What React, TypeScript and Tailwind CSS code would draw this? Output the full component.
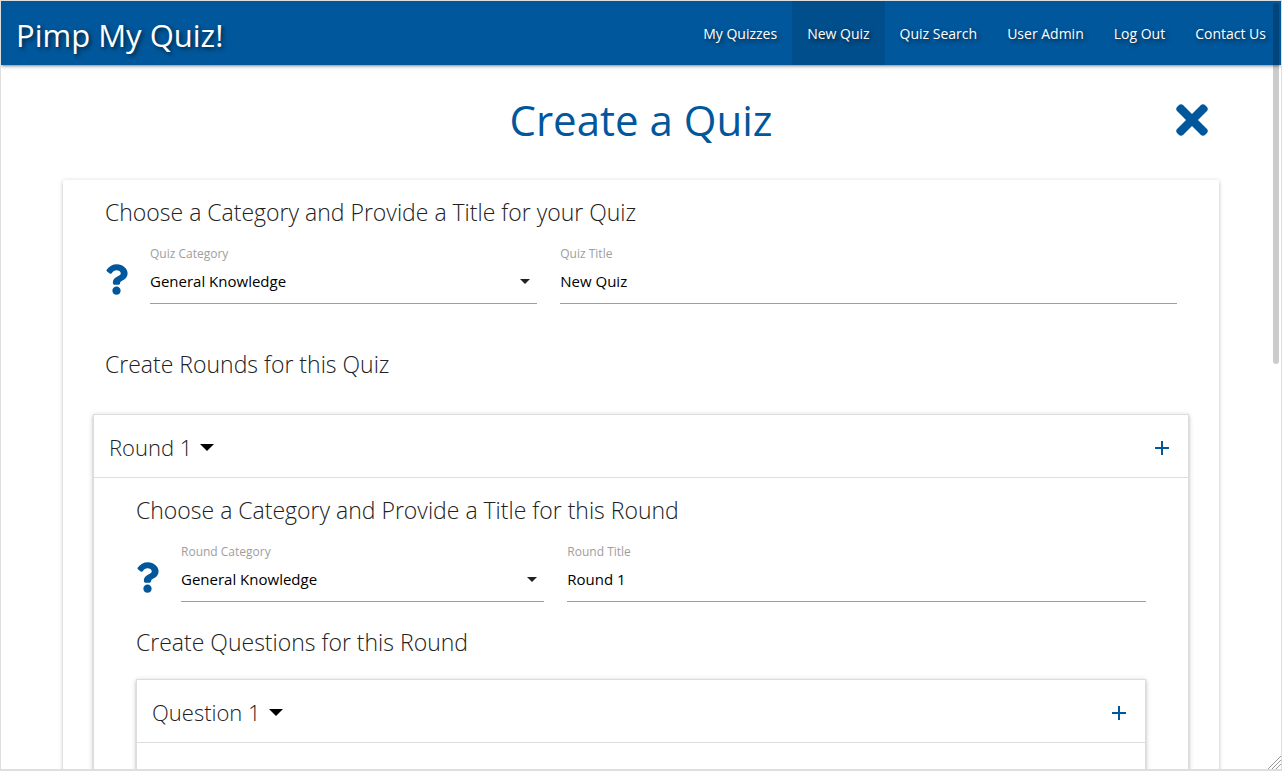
import { useState, type ReactNode } from "react";
import { FaQuestion, FaTimes } from "react-icons/fa";

const navItems = ["My Quizzes", "New Quiz", "Quiz Search", "User Admin", "Log Out", "Contact Us"];
const categories = ["General Knowledge", "Geography", "History", "Music", "Science", "Sport"];

function Caret({ className }: { className: string }) {
  return (
    <svg viewBox="0 0 14 7" className={className} fill="currentColor" aria-hidden="true">
      <path d="M0 0h14L7 7z" />
    </svg>
  );
}

function SectionTitle({ children }: { children: ReactNode }) {
  return <h2 className="text-[23px] leading-10 font-light text-[#212121]">{children}</h2>;
}

type FieldsProps = { id: string; name: string; title: string };

function DetailFields({ id, name, title }: FieldsProps) {
  const [category, setCategory] = useState(categories[0]);
  const [value, setValue] = useState(title);
  return (
    <div className="flex pt-[13px]">
      <button type="button" aria-label={`Help with ${name} details`} className="mt-[18px] mr-[22px] h-8 shrink-0 text-[#01579b]">
        <FaQuestion className="h-[31px] w-[23px]" />
      </button>
      <div className="grid flex-1 grid-cols-[27fr_43fr] gap-x-[23px]">
        <div className="flex flex-col">
          <label htmlFor={`${id}-category`} className="text-xs leading-[18px] text-[#9e9e9e]">
            {name} Category
          </label>
          <div className="relative border-b border-[#9e9e9e]">
            <select
              id={`${id}-category`}
              value={category}
              onChange={(e) => setCategory(e.target.value)}
              className="block h-10 w-full appearance-none bg-transparent pb-1 text-[15px] text-black outline-none"
            >
              {categories.map((c) => (
                <option key={c}>{c}</option>
              ))}
            </select>
            <Caret className="pointer-events-none absolute top-4 right-[7px] h-[5px] w-[10px] text-[#212121]" />
          </div>
        </div>
        <div className="flex flex-col">
          <label htmlFor={`${id}-title`} className="text-xs leading-[18px] text-[#9e9e9e]">
            {name} Title
          </label>
          <input
            id={`${id}-title`}
            type="text"
            value={value}
            onChange={(e) => setValue(e.target.value)}
            className="block h-[41px] w-full border-b border-[#9e9e9e] bg-transparent pb-1 text-[15px] text-black outline-none"
          />
        </div>
      </div>
    </div>
  );
}

function Panel({ title, addLabel, children }: { title: string; addLabel: string; children?: ReactNode }) {
  return (
    <section className="border border-[#ddd] bg-white shadow-[0_2px_2px_0_rgba(0,0,0,0.14),0_3px_1px_-2px_rgba(0,0,0,0.12),0_1px_5px_0_rgba(0,0,0,0.2)]">
      <header className="flex h-[63px] items-center justify-between border-b border-[#ddd] pt-1 pr-[18px] pl-[15px]">
        <button type="button" className="flex items-center gap-2 pb-0.5 text-[22px] leading-8 font-light text-[#212121]">
          {title}
          <Caret className="h-[7px] w-[14px] text-black" />
        </button>
        <button type="button" aria-label={addLabel} className="text-[#01579b]">
          <svg viewBox="0 0 16 16" className="h-4 w-4" stroke="currentColor" strokeWidth="2" aria-hidden="true">
            <path d="M8 1v14M1 8h14" />
          </svg>
        </button>
      </header>
      {children}
    </section>
  );
}

export default function App() {
  return (
    <div className="relative flex h-screen flex-col overflow-hidden border border-b-2 border-[#dedede] bg-white font-['Open_Sans','Noto_Sans',sans-serif]">
      <nav className="z-10 flex h-16 shrink-0 items-center justify-between bg-[#01579b] text-white shadow-[0_2px_2px_0_rgba(0,0,0,0.14),0_3px_1px_-2px_rgba(0,0,0,0.12),0_1px_5px_0_rgba(0,0,0,0.2)]">
        <a href="#home" className="pt-1 pl-[15px] text-[31px] leading-10 [text-shadow:2px_2px_4px_rgba(0,0,0,0.6)]">
          Pimp My Quiz!
        </a>
        <ul className="flex">
          {navItems.map((item) => (
            <li key={item}>
              <a
                href={`#${item.toLowerCase().replace(" ", "-")}`}
                aria-current={item === "New Quiz" ? "page" : undefined}
                className="block px-[15px] pt-0.5 text-sm leading-[62px] [text-shadow:2px_2px_4px_rgba(0,0,0,0.6)] aria-[current=page]:bg-black/10"
              >
                {item}
              </a>
            </li>
          ))}
        </ul>
      </nav>

      <main className="min-h-0 flex-1 overflow-y-auto px-[62px] [scrollbar-width:none]">
        <div className="mb-[5px] grid h-[110px] grid-cols-[1fr_auto_1fr] items-center">
          <h1 className="col-start-2 text-[42px] leading-[60px] text-[#01579b]">Create a Quiz</h1>
          <button type="button" aria-label="Close" className="mr-[11px] justify-self-end text-[#01579b]">
            <FaTimes className="h-[46px] w-8" />
          </button>
        </div>

        <form className="rounded-xs px-[30px] pt-3 pb-8 shadow-[0_2px_2px_0_rgba(0,0,0,0.14),0_3px_1px_-2px_rgba(0,0,0,0.12),0_1px_5px_0_rgba(0,0,0,0.2)]">
          <div className="px-3">
            <SectionTitle>Choose a Category and Provide a Title for your Quiz</SectionTitle>
            <DetailFields id="quiz" name="Quiz" title="New Quiz" />
            <div className="pt-10 pb-[30px]">
              <SectionTitle>Create Rounds for this Quiz</SectionTitle>
            </div>
          </div>
          <Panel title="Round 1" addLabel="Add round">
            <div className="px-[42px] pt-3 pb-8">
              <SectionTitle>Choose a Category and Provide a Title for this Round</SectionTitle>
              <DetailFields id="round" name="Round" title="Round 1" />
              <div className="pt-5 pb-[17px]">
                <SectionTitle>Create Questions for this Round</SectionTitle>
              </div>
              <Panel title="Question 1" addLabel="Add question">
                <div className="h-40" />
              </Panel>
            </div>
          </Panel>
        </form>
      </main>

      <div className="pointer-events-none absolute top-0.5 right-0.5 z-20 h-[47%] w-1.5 rounded-full bg-black/20" />
      <svg viewBox="0 0 14 14" className="pointer-events-none absolute right-0 bottom-0 h-3.5 w-3.5" stroke="#999" aria-hidden="true">
        <path d="M1 14L14 1M5 14L14 5M9 14L14 9" />
      </svg>
    </div>
  );
}
